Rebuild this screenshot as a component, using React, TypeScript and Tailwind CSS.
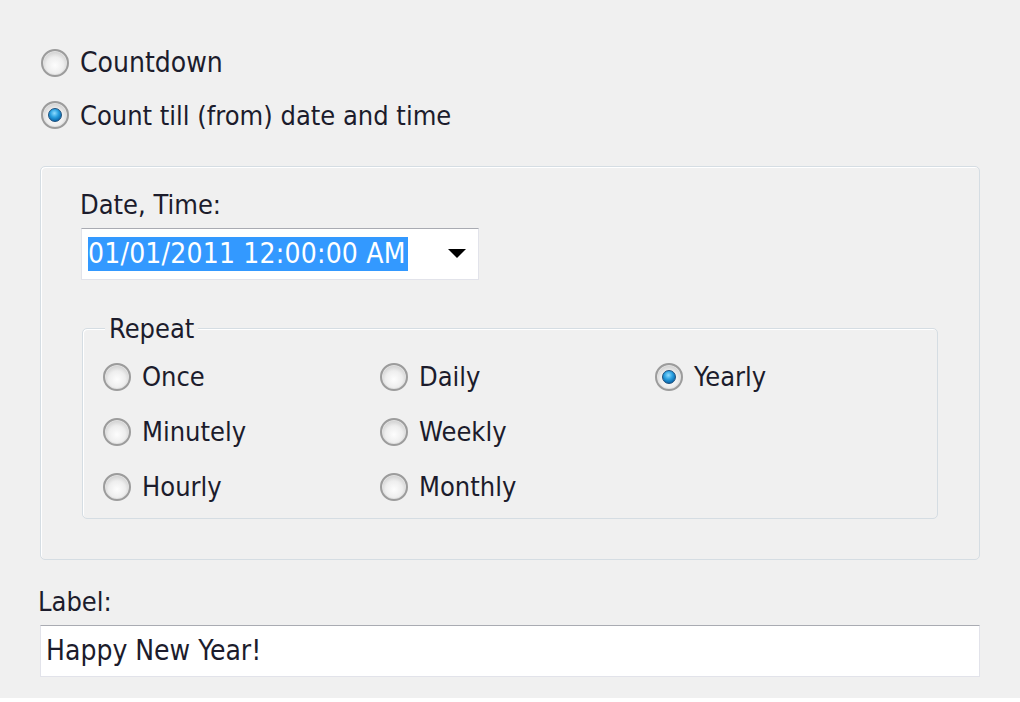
import React from "react";

// Vista-style radio button
const Radio = ({ checked = false }: { checked?: boolean }) => (
  <span className="flex h-[28px] w-[28px] shrink-0 items-center justify-center rounded-full border-[2px] border-[#9c9c9c] bg-[radial-gradient(circle_at_50%_60%,#fdfdfd_0%,#eeeeee_45%,#cfcfcf_75%,#b5b5b5_100%)] shadow-[inset_0_0_0_1px_#e2e2e2]">
    {checked && (
      <span className="h-[14px] w-[14px] rounded-full border border-[#1d4f7c] bg-[radial-gradient(circle_at_45%_35%,#8fdcff_0%,#2aa0e0_40%,#0b6aae_75%,#0a3e6e_100%)]" />
    )}
  </span>
);

const Option = ({ label, checked }: { label: string; checked?: boolean }) => (
  <div className="flex h-[55px] items-center gap-[11px]">
    <Radio checked={checked} />
    <span>{label}</span>
  </div>
);

const App = () => {
  return (
    <div
      className="h-[698px] w-[1020px] bg-[#f0f0f0] text-[27px] leading-none text-[#1c1c2c]"
      style={{ fontFamily: '"DejaVu Sans Condensed", "DejaVu Sans", sans-serif' }}
    >
      {/* mode radios */}
      <div className="pl-[41px] pt-[37px]">
        <div className="flex h-[52px] items-center gap-[11px]">
          <Radio />
          <span className="text-[28px]">Countdown</span>
        </div>
        <div className="flex h-[52px] items-center gap-[11px]">
          <Radio checked />
          <span>Count till (from) date and time</span>
        </div>
      </div>

      {/* date/time group */}
      <div className="ml-[40px] mt-[25px] h-[394px] w-[940px] rounded-[5px] border border-[#d5dde3] pl-[39px] pt-[23px] shadow-[inset_1px_1px_0_#ffffff]">
        <div className="flex h-[28px] items-center">Date, Time:</div>
        <div className="ml-px mt-[10px] flex h-[52px] w-[398px] items-center border border-[#e2e3ea] border-t-[#a9abb2] bg-white pl-[6px]">
          <span className="flex h-[34px] items-center bg-[#3399ff] pr-[2px] text-[28px] tracking-[0.2px] text-white">
            01/01/2011 12:00:00 AM
          </span>
          <svg className="ml-auto mr-[12px]" width="18" height="10" viewBox="0 0 18 10">
            <path d="M0 0 L18 0 L9 9 Z" fill="#000" />
          </svg>
        </div>

        {/* repeat group */}
        <div className="relative ml-[2px] mt-[48px] h-[191px] w-[856px] rounded-[5px] border border-[#d5dde3] pl-[20px] pt-[20px] shadow-[inset_1px_1px_0_#ffffff]">
          <span className="absolute left-[22px] top-[-14px] bg-[#f0f0f0] px-[4px]">Repeat</span>
          <div className="grid grid-cols-[277px_275px_1fr]">
            <Option label="Once" />
            <Option label="Daily" />
            <Option label="Yearly" checked />
            <Option label="Minutely" />
            <Option label="Weekly" />
            <div />
            <Option label="Hourly" />
            <Option label="Monthly" />
          </div>
        </div>
      </div>

      {/* label field */}
      <div className="pl-[38px] pt-[27px]">
        <div className="flex h-[28px] items-center">Label:</div>
      </div>
      <div className="ml-[40px] mt-[10px] flex h-[52px] w-[940px] items-center border border-[#e2e3ea] border-t-[#a9abb2] bg-white pl-[5px] text-[28px]">
        Happy New Year!
      </div>
    </div>
  );
};

export default App;
